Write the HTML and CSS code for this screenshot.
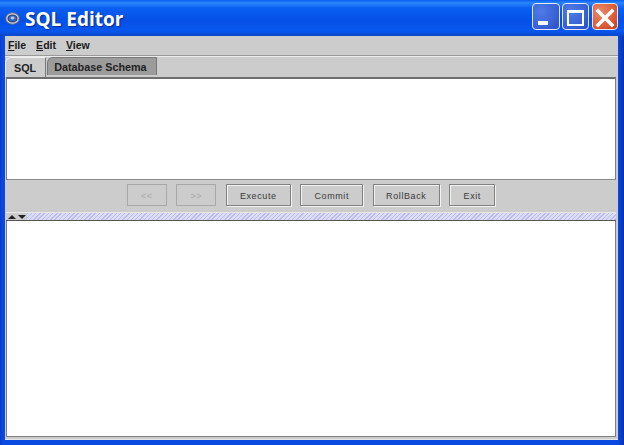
FILE: index.html
```html
<!DOCTYPE html>
<html lang="en">
<head>
<meta charset="utf-8">
<title>SQL Editor</title>
<link rel="stylesheet" href="styles.css">
</head>
<body>
<div class="window">
  <header class="titlebar">
    <svg class="app-icon" width="15" height="13" viewBox="0 0 15 13">
      <ellipse cx="7.5" cy="6.5" rx="6.8" ry="5.8" fill="#c4ccd8" stroke="#5a6a88"/>
      <ellipse cx="7.5" cy="6.5" rx="4.4" ry="3.4" fill="#3a62c4" stroke="#2a3658"/>
      <ellipse cx="7.5" cy="6" rx="2" ry="1.4" fill="#b8c6ea"/>
    </svg>
    <h1 class="title">SQL Editor</h1>
    <div class="controls">
      <div class="wbtn wbtn-min">
        <svg width="26" height="25" viewBox="0 0 26 25"><rect x="5" y="17" width="10" height="4" fill="#fff"/></svg>
      </div>
      <div class="wbtn wbtn-max">
        <svg width="25" height="25" viewBox="0 0 25 25"><rect x="5" y="7" width="15" height="14" fill="none" stroke="#fff" stroke-width="2"/><rect x="4" y="6" width="17" height="3" fill="#fff"/></svg>
      </div>
      <div class="wbtn wbtn-close">
        <svg width="24" height="25" viewBox="0 0 24 25"><path d="M5 7 19 21M19 7 5 21" stroke="#fff" stroke-width="3.6" stroke-linecap="square" fill="none"/></svg>
      </div>
    </div>
  </header>
  <div class="client">
    <nav class="menubar">
      <span class="menu"><u>F</u>ile</span>
      <span class="menu"><u>E</u>dit</span>
      <span class="menu"><u>V</u>iew</span>
    </nav>
    <div class="tabs">
      <div class="tab tab-active">SQL</div>
      <div class="tab">Database Schema</div>
    </div>
    <div class="editor"></div>
    <div class="toolbar">
      <button class="btn btn-nav" disabled>&lt;&lt;</button>
      <button class="btn btn-nav" disabled>&gt;&gt;</button>
      <button class="btn btn-execute">Execute</button>
      <button class="btn btn-commit">Commit</button>
      <button class="btn btn-rollback">RollBack</button>
      <button class="btn btn-exit">Exit</button>
    </div>
    <div class="divider">
      <div class="arrows">
        <span class="arrow-up"></span>
        <span class="arrow-down"></span>
      </div>
      <div class="grip"></div>
    </div>
    <div class="results"></div>
  </div>
</div>
</body>
</html>
```
FILE: styles.css
```css
* { box-sizing: border-box; }
html, body { margin: 0; padding: 0; }
body { width: 624px; height: 445px; overflow: hidden; background: #0a3fd8; }

.window {
  display: flex;
  flex-direction: column;
  width: 624px;
  height: 445px;
  padding: 0 6px 5px 5px;
  background: linear-gradient(90deg, #0a3ccf 0, #0a4ae0 3px, #0a4ae0 99%, #0633b0 100%);
  border-radius: 7px 7px 0 0;
}

.titlebar {
  flex: none;
  display: flex;
  align-items: center;
  height: 36px;
  margin: 0 -6px 0 -5px;
  padding: 0 6px 0 5px;
  background: linear-gradient(180deg, #0a5ef0 0, #2a86fa 3px, #0b5ff2 8px, #0550e6 20px, #0757ee 31px, #0a46c8 36px);
}
.app-icon { flex: none; margin-top: 1px; }
.title {
  margin: 3px 0 0 5px;
  font: bold 19px/1 "Open Sans", sans-serif;
  color: #fff;
  text-shadow: 1px 1px 1px #0a2a90;
}
.controls { display: flex; gap: 2px; margin-left: auto; margin-bottom: 3px; }
.wbtn {
  height: 27px;
  border: 1px solid #dfe8ff;
  border-radius: 4px;
  overflow: hidden;
}
.wbtn svg { display: block; }
.wbtn-min { width: 28px; background: radial-gradient(circle at 30% 30%, #4f7be6 0, #3a62d6 60%, #2a4ec0 100%); }
.wbtn-max { width: 27px; background: radial-gradient(circle at 30% 30%, #4f7be6 0, #3a62d6 60%, #2a4ec0 100%); }
.wbtn-close { width: 26px; margin-left: 1px; background: radial-gradient(circle at 30% 30%, #e88a6c 0, #dd5c34 60%, #c63c1a 100%); }

.client {
  flex: 1;
  display: flex;
  flex-direction: column;
  min-height: 0;
  background: #cccccc;
  padding: 0 2px 2px 1px;
  border-bottom: 1px solid #e6e6e6;
}

.menubar {
  flex: none;
  display: flex;
  align-items: center;
  gap: 10px;
  height: 20px;
  margin: 0 -2px 0 -1px;
  padding: 0 3px 1px 3px;
  border-bottom: 1px solid #9a9a9a;
  box-shadow: 0 1px 0 #ececec;
}
.menu { font: bold 10.5px "Liberation Sans", sans-serif; color: #1a1a1a; }

.tabs {
  flex: none;
  display: flex;
  align-items: flex-end;
  height: 21px;
  margin-left: -1px;
  gap: 1px;
  border-bottom: 2px solid #cccccc;
}
.tab {
  display: flex;
  align-items: center;
  height: 18px;
  padding: 0 9px 0 6px;
  font: bold 10.8px "Liberation Sans", sans-serif;
  color: #222;
  background: #9c9c9c;
  border: 1px solid #777;
  border-bottom: 0;
  border-top-left-radius: 6px;
  border-top-right-radius: 1px;
}
.tab-active {
  height: 20px;
  margin-bottom: -2px;
  padding: 0 9px 0 8px;
  background: #cccccc;
  border-color: #eeeeee;
  border-right-color: #777;
}

.editor {
  flex: none;
  height: 103px;
  background: #fff;
  border: 1px solid #7f7f7f;
  border-top: 2px solid #6e6e6e;
  border-bottom-color: #8a8a8a;
}

.toolbar {
  flex: none;
  display: flex;
  justify-content: center;
  align-items: center;
  gap: 9.5px;
  height: 32px;
  padding-bottom: 2px;
}
.btn {
  height: 22px;
  padding: 1px 0 0;
  background: #cccccc;
  border: 1px solid #808080;
  box-shadow: 1px 1px 0 #f2f2f2, inset 1px 1px 0 #f2f2f2;
  font: 9px "Liberation Sans", sans-serif;
  letter-spacing: 0.6px;
  color: #3a3a3a;
}
.btn-nav {
  width: 40px;
  border-color: #a8a8a8;
  box-shadow: none;
  color: #a8a8a8;
}
.btn-execute { width: 65px; }
.btn-commit { width: 63px; }
.btn-rollback { width: 67px; }
.btn-exit { width: 46px; }

.divider {
  flex: none;
  display: flex;
  align-items: center;
  height: 9px;
  border-top: 1px solid #e8e8e8;
  border-bottom: 1px solid #555;
}
.arrows { flex: none; display: flex; align-items: center; gap: 2px; width: 21px; padding-left: 2px; height: 100%; }
.arrow-up, .arrow-down { display: block; width: 0; height: 0; border-left: 4px solid transparent; border-right: 4px solid transparent; }
.arrow-up { border-bottom: 4px solid #222; }
.arrow-down { border-top: 4px solid #222; }
.grip {
  flex: 1;
  height: 100%;
  background-color: #d6d6f4;
  background-image: repeating-linear-gradient(135deg, #bcbcec 0, #bcbcec 1px, #dcdcf8 1px, #dcdcf8 3px);
}

.results {
  flex: 1;
  min-height: 0;
  background: #fff;
  border: 1px solid #7f7f7f;
  border-top: 0;
}
```
